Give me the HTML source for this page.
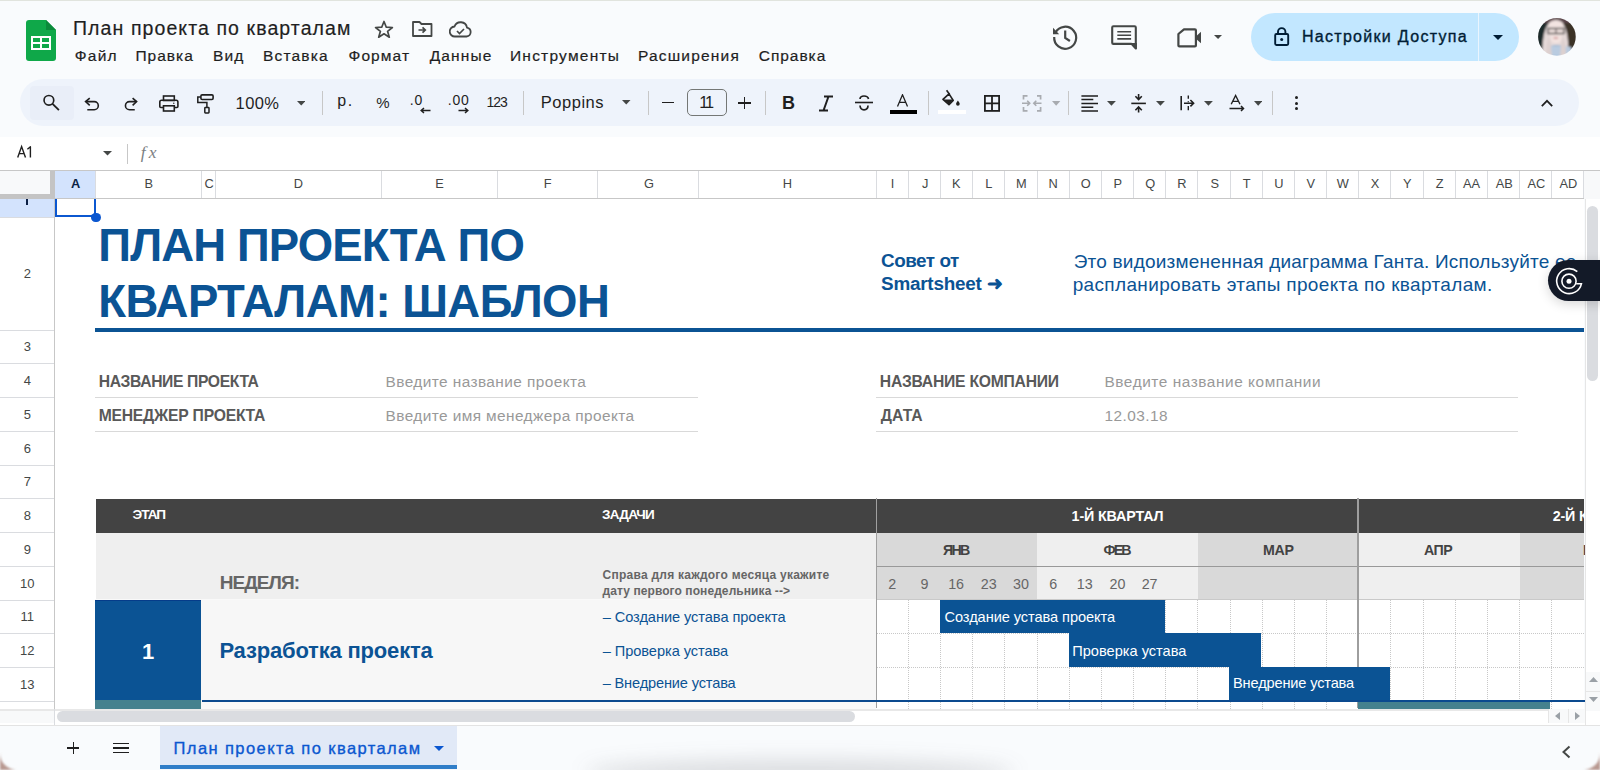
<!DOCTYPE html>
<html><head><meta charset="utf-8"><style>
html,body{margin:0;padding:0;}
body{width:1600px;height:770px;overflow:hidden;position:relative;background:#f9fbfd;font-family:"Liberation Sans",sans-serif;}
.a{position:absolute;}
.t{position:absolute;white-space:pre;}
</style></head><body>
<div class="a" style="left:0px;top:0px;width:1600px;height:1.2px;background:#e1e4de;"></div>
<svg class="a" style="left:26px;top:20px;" width="30" height="41" viewBox="0 0 30 41">
<path d="M0 3 Q0 0 3 0 H20 L30 10 V38 Q30 41 27 41 H3 Q0 41 0 38 Z" fill="#0fa849"/>
<path d="M20 0 L30 10 H20 Z" fill="#0b8a3b"/>
<rect x="5" y="16" width="20" height="14" fill="#fff"/>
<rect x="7" y="18" width="7" height="4" fill="#0fa849"/>
<rect x="16" y="18" width="7" height="4" fill="#0fa849"/>
<rect x="7" y="24" width="7" height="4" fill="#0fa849"/>
<rect x="16" y="24" width="7" height="4" fill="#0fa849"/>
</svg>
<div class="t" style="left:73.00px;top:18.79px;font-size:19.5px;line-height:19.5px;color:#1f1f1f;font-weight:normal;letter-spacing:1.092px;-webkit-text-stroke:0.2px currentColor;">План проекта по кварталам</div>
<svg class="a" style="left:374px;top:20px;" width="20" height="18" viewBox="0 0 20 18"><path d="M10 1.5 L12.3 7.2 L18.4 7.5 L13.6 11.3 L15.3 17.2 L10 13.8 L4.7 17.2 L6.4 11.3 L1.6 7.5 L7.7 7.2 Z" fill="none" stroke="#444746" stroke-width="1.7" stroke-linejoin="round"/></svg>
<svg class="a" style="left:412px;top:21px;" width="21" height="16" viewBox="0 0 21 16"><path d="M1 1 H7.5 L9.5 3 H19.5 V15 H1 Z" fill="none" stroke="#444746" stroke-width="1.8" stroke-linejoin="round"/><path d="M6.5 9 H13 M10.5 6.3 L13.3 9 L10.5 11.7" fill="none" stroke="#444746" stroke-width="1.7"/></svg>
<svg class="a" style="left:449px;top:21px;" width="23" height="17" viewBox="0 0 23 17"><path d="M6 15.5 H17.5 A4.5 4.5 0 0 0 18 6.6 A6.5 6.5 0 0 0 5.5 5.5 A5 5 0 0 0 6 15.5 Z" fill="none" stroke="#444746" stroke-width="1.8"/><path d="M8 10 L10.5 12.5 L15 8" fill="none" stroke="#444746" stroke-width="1.7"/></svg>
<div class="t" style="left:74.70px;top:48.28px;font-size:15.5px;line-height:15.5px;color:#1f1f1f;font-weight:normal;letter-spacing:1.279px;-webkit-text-stroke:0.2px currentColor;">Файл</div>
<div class="t" style="left:135.40px;top:48.28px;font-size:15.5px;line-height:15.5px;color:#1f1f1f;font-weight:normal;letter-spacing:1.012px;-webkit-text-stroke:0.2px currentColor;">Правка</div>
<div class="t" style="left:213.00px;top:48.28px;font-size:15.5px;line-height:15.5px;color:#1f1f1f;font-weight:normal;letter-spacing:1.102px;-webkit-text-stroke:0.2px currentColor;">Вид</div>
<div class="t" style="left:263.00px;top:48.28px;font-size:15.5px;line-height:15.5px;color:#1f1f1f;font-weight:normal;letter-spacing:1.168px;-webkit-text-stroke:0.2px currentColor;">Вставка</div>
<div class="t" style="left:348.50px;top:48.28px;font-size:15.5px;line-height:15.5px;color:#1f1f1f;font-weight:normal;letter-spacing:1.108px;-webkit-text-stroke:0.2px currentColor;">Формат</div>
<div class="t" style="left:429.70px;top:48.28px;font-size:15.5px;line-height:15.5px;color:#1f1f1f;font-weight:normal;letter-spacing:1.124px;-webkit-text-stroke:0.2px currentColor;">Данные</div>
<div class="t" style="left:510.00px;top:48.28px;font-size:15.5px;line-height:15.5px;color:#1f1f1f;font-weight:normal;letter-spacing:1.224px;-webkit-text-stroke:0.2px currentColor;">Инструменты</div>
<div class="t" style="left:638.00px;top:48.28px;font-size:15.5px;line-height:15.5px;color:#1f1f1f;font-weight:normal;letter-spacing:1.184px;-webkit-text-stroke:0.2px currentColor;">Расширения</div>
<div class="t" style="left:758.75px;top:48.28px;font-size:15.5px;line-height:15.5px;color:#1f1f1f;font-weight:normal;letter-spacing:0.953px;-webkit-text-stroke:0.2px currentColor;">Справка</div>
<svg class="a" style="left:1050px;top:22px;" width="30" height="30" viewBox="0 0 30 30"><path d="M5.5 10.5 A11 11 0 1 1 4.2 15" fill="none" stroke="#444746" stroke-width="2.2"/><path d="M3 5.8 L3 12.2 L9.2 12.2 Z" fill="#444746"/><path d="M15.2 8.6 V15.8 L19.9 19" fill="none" stroke="#444746" stroke-width="2.2"/></svg>
<svg class="a" style="left:1110px;top:24px;" width="28" height="27" viewBox="0 0 28 27"><path d="M3.4 2.2 H24.6 Q25.8 2.2 25.8 3.4 V24.5 L21.5 19.9 H3.4 Q2.2 19.9 2.2 18.7 V3.4 Q2.2 2.2 3.4 2.2 Z" fill="none" stroke="#444746" stroke-width="2.1" stroke-linejoin="round"/><path d="M7.3 7.8 H21.1 M7.3 11.2 H21.1 M7.3 14.9 H21.1" stroke="#444746" stroke-width="1.6"/><path d="M20.5 19 L26.8 25.5 V19 Z" fill="#444746"/></svg>
<svg class="a" style="left:1175px;top:26px;" width="30" height="23" viewBox="0 0 30 23"><path d="M3.4 8 L9 3.3 H19.9 Q20.9 3.3 20.9 4.3 V19.4 Q20.9 20.4 19.9 20.4 H4.4 Q3.4 20.4 3.4 19.4 Z" fill="none" stroke="#444746" stroke-width="2.2" stroke-linejoin="round"/><path d="M20.9 10.5 L26 5.8 V17.3 L20.9 12.8 Z" fill="#444746"/></svg>
<svg class="a" style="left:1214.4px;top:34.7px;" width="8.1" height="4" viewBox="0 0 8.1 4"><path d="M0 0 H8.1 L4.05 4 Z" fill="#444746"/></svg>
<div class="a" style="left:1250.5px;top:13px;width:268px;height:48px;background:#c2e7ff;border-radius:24px;"></div>
<div class="a" style="left:1477.5px;top:13px;width:1.2px;height:48px;background:#eaf5fe;"></div>
<svg class="a" style="left:1272px;top:26px;" width="18" height="20" viewBox="0 0 18 20"><rect x="3.2" y="8" width="13" height="11" rx="1.2" fill="none" stroke="#001d35" stroke-width="1.9"/><path d="M6 8 V5.8 A3.7 3.7 0 0 1 13.4 5.8 V8" fill="none" stroke="#001d35" stroke-width="1.9"/><circle cx="9.7" cy="13.5" r="1.5" fill="#001d35"/></svg>
<div class="t" style="left:1301.90px;top:29.36px;font-size:16px;line-height:16px;color:#001d35;font-weight:normal;letter-spacing:1.307px;-webkit-text-stroke:0.35px currentColor;">Настройки Доступа</div>
<svg class="a" style="left:1493px;top:35px;" width="10" height="6" viewBox="0 0 10 6"><path d="M0 0 H10 L5 5 Z" fill="#001d35"/></svg>
<svg class="a" style="left:1537px;top:17px" width="40" height="40" viewBox="0 0 40 40">
<defs><clipPath id="av"><circle cx="19.9" cy="19.85" r="18.9"/></clipPath><filter id="bl" x="-10%" y="-10%" width="120%" height="120%"><feGaussianBlur stdDeviation="0.9"/></filter></defs>
<g clip-path="url(#av)"><g filter="url(#bl)">
<rect width="40" height="40" fill="#1f2b2b"/>
<rect x="25" width="15" height="40" fill="#3a3026"/>
<rect x="0" y="0" width="40" height="6" fill="#5a4548"/>
<path d="M5 40 C5.5 22 7 3 19 3 C30 3 32 22 31 40 Z" fill="#e6dad9"/>
<path d="M12 6 Q19 2 26 6 L26 22 Q19 30 12 22 Z" fill="#f3e4e1"/>
<path d="M11 11.5 H27 V16.5 H11 Z" fill="none" stroke="#4a4444" stroke-width="1.3"/>
<path d="M19 12 V16" stroke="#4a4444" stroke-width="1"/>
<ellipse cx="18.8" cy="21" rx="2.6" ry="1" fill="#d59c9c"/>
<path d="M13 40 L14 29 Q19 27 25 29 L34 30 L36 40 Z" fill="#9fb9d6"/>
<path d="M14 31 H34 M14 34 H35 M14 37 H35" stroke="#e8eef5" stroke-width="1"/>
<path d="M9 40 C9 30 10 22 13 18 L15 40 Z" fill="#ddd0cf"/>
<path d="M23 40 L25 18 C28 22 29 30 29 40 Z" fill="#ddd0cf"/>
</g></g></svg>
<div class="a" style="left:20px;top:79px;width:1559px;height:46.8px;background:#eef3fb;border-radius:23.4px;"></div>
<div class="a" style="left:30px;top:86px;width:44px;height:33.5px;background:#e9eef8;border-radius:4px;"></div>
<svg class="a" style="left:38px;top:90px;" width="28" height="26" viewBox="0 0 28 26"><circle cx="10.9" cy="10.3" r="4.85" fill="none" stroke="#1f1f1f" stroke-width="1.65"/><path d="M14.6 13.9 L20.9 20.2" stroke="#1f1f1f" stroke-width="1.85"/></svg>
<svg class="a" style="left:80px;top:90px;" width="60" height="26" viewBox="0 0 60 26"><path d="M9.75 8.1 L5.6 11.6 L9.75 15.3" fill="none" stroke="#1f1f1f" stroke-width="1.6" stroke-linejoin="miter"/><path d="M5.9 11.6 H14.25 A4.05 4.05 0 0 1 14.25 19.7 H7.3" fill="none" stroke="#1f1f1f" stroke-width="1.6"/><path d="M52.6 8.1 L56.6 11.6 L52.6 15.3" fill="none" stroke="#1f1f1f" stroke-width="1.6"/><path d="M56.3 11.6 H49.5 A4.05 4.05 0 0 0 49.5 19.7 H54.75" fill="none" stroke="#1f1f1f" stroke-width="1.6"/></svg>
<svg class="a" style="left:150px;top:88px;" width="70" height="30" viewBox="0 0 70 30"><rect x="13.5" y="8" width="10.8" height="4.5" fill="none" stroke="#1f1f1f" stroke-width="1.6"/><path d="M13.5 19.5 H10.8 Q9.8 19.5 9.8 18.5 V14 Q9.8 12.3 11.5 12.3 H26.2 Q27.9 12.3 27.9 14 V18.5 Q27.9 19.5 26.9 19.5 H24.3" fill="none" stroke="#1f1f1f" stroke-width="1.6"/><rect x="13.5" y="17.8" width="10.8" height="5.2" fill="none" stroke="#1f1f1f" stroke-width="1.6"/><circle cx="23.8" cy="15.3" r="0.7" fill="#1f1f1f"/><rect x="50.9" y="6.9" width="12.2" height="4.6" rx="1.2" fill="none" stroke="#1f1f1f" stroke-width="1.6"/><path d="M50.5 9.1 H47.8 V14.6 H56.9 V19.2" fill="none" stroke="#1f1f1f" stroke-width="1.5"/><rect x="54.8" y="19.6" width="4.2" height="5.3" rx="0.6" fill="none" stroke="#1f1f1f" stroke-width="1.5"/></svg>
<div class="t" style="left:235.60px;top:95.33px;font-size:16.5px;line-height:16.5px;color:#1f1f1f;font-weight:normal;letter-spacing:0.357px;">100%</div>
<svg class="a" style="left:296.5px;top:101px;" width="8.5" height="4.5" viewBox="0 0 8.5 4.5"><path d="M0 0 H8.5 L4.25 4.5 Z" fill="#444746"/></svg>
<div class="a" style="left:321.5px;top:91px;width:1px;height:24px;background:#c7c7c7;"></div>
<div class="t" style="left:337.30px;top:93.46px;font-size:16px;line-height:16px;color:#1f1f1f;font-weight:normal;letter-spacing:1.602px;">р.</div>
<div class="t" style="left:376.30px;top:94.90px;font-size:15px;line-height:15px;color:#1f1f1f;font-weight:normal;">%</div>
<div class="t" style="left:409.80px;top:92.75px;font-size:14px;line-height:14px;color:#1f1f1f;font-weight:normal;letter-spacing:0.710px;">.0</div>
<svg class="a" style="left:420px;top:106.5px;" width="11" height="7" viewBox="0 0 11 7"><path d="M10.5 3.5 H1.5 M4 1 L1.2 3.5 L4 6" fill="none" stroke="#1f1f1f" stroke-width="1.5"/></svg>
<div class="t" style="left:447.80px;top:92.75px;font-size:14px;line-height:14px;color:#1f1f1f;font-weight:normal;letter-spacing:0.762px;">.00</div>
<svg class="a" style="left:458px;top:106.5px;" width="11" height="7" viewBox="0 0 11 7"><path d="M0.5 3.5 H9.5 M7 1 L9.8 3.5 L7 6" fill="none" stroke="#1f1f1f" stroke-width="1.5"/></svg>
<div class="t" style="left:486.40px;top:95.15px;font-size:14px;line-height:14px;color:#1f1f1f;font-weight:normal;letter-spacing:-0.936px;">123</div>
<div class="a" style="left:522.5px;top:91px;width:1px;height:24px;background:#c7c7c7;"></div>
<div class="t" style="left:540.80px;top:94.03px;font-size:16.5px;line-height:16.5px;color:#1f1f1f;font-weight:normal;letter-spacing:0.520px;">Poppins</div>
<svg class="a" style="left:622px;top:99.5px;" width="8.5" height="5" viewBox="0 0 8.5 5"><path d="M0 0 H8.5 L4.25 4.5 Z" fill="#444746"/></svg>
<div class="a" style="left:648.2px;top:91px;width:1px;height:24px;background:#c7c7c7;"></div>
<div class="a" style="left:662.2px;top:101.5px;width:12px;height:1.8px;background:#1f1f1f;"></div>
<div class="a" style="left:687.1px;top:89px;width:39.5px;height:27.3px;border:1px solid #747775;border-radius:5px;box-sizing:border-box;"></div>
<div class="t" style="left:699.30px;top:94.20px;font-size:16.3px;line-height:16.3px;color:#1f1f1f;font-weight:normal;letter-spacing:-2.200px;">11</div>
<div class="a" style="left:738.1px;top:101.8px;width:12.5px;height:1.8px;background:#1f1f1f;"></div>
<div class="a" style="left:743.5px;top:96.8px;width:1.8px;height:12px;background:#1f1f1f;"></div>
<div class="a" style="left:764.5px;top:91px;width:1px;height:24px;background:#c7c7c7;"></div>
<div class="t" style="left:782.00px;top:93.96px;font-size:18px;line-height:18px;color:#1f1f1f;font-weight:bold;">B</div>
<svg class="a" style="left:818px;top:95px;" width="16" height="17" viewBox="0 0 16 17"><path d="M6 1.5 H15 M1 15.5 H10 M10.5 1.5 L5.5 15.5" fill="none" stroke="#1f1f1f" stroke-width="2"/></svg>
<svg class="a" style="left:853px;top:94px;" width="22" height="18" viewBox="0 0 22 18"><path d="M2 8.5 H20" stroke="#1f1f1f" stroke-width="1.6"/><path d="M15.5 5 C15 2.6 13.2 2 11 2 C8.8 2 7.2 3 7 5" fill="none" stroke="#1f1f1f" stroke-width="1.7"/><path d="M7 11.5 C7.3 14.8 9 15.8 11 15.8 C13.2 15.8 15 14.8 15 11.5" fill="none" stroke="#1f1f1f" stroke-width="1.7"/></svg>
<svg class="a" style="left:896px;top:94px;" width="13" height="13" viewBox="0 0 13 13"><path d="M1.5 12.5 L6.5 0.8 L11.5 12.5 M3.4 8.3 H9.6" fill="none" stroke="#1f1f1f" stroke-width="1.3"/></svg>
<div class="a" style="left:890px;top:110px;width:27px;height:4px;background:#000;"></div>
<div class="a" style="left:927.5px;top:91px;width:1px;height:24px;background:#c7c7c7;"></div>
<svg class="a" style="left:938px;top:88px;" width="30" height="20" viewBox="0 0 30 20"><path d="M8.6 2.3 L11.6 6.5" stroke="#1f1f1f" stroke-width="1.6"/><path d="M5 11.3 L11 5.9 L15.2 12.4 L11 16.6 Z" fill="none" stroke="#1f1f1f" stroke-width="1.7" stroke-linejoin="round"/><path d="M5.6 11.6 H15 L11 16.2 Z" fill="#1f1f1f"/><path d="M19.9 12.6 Q21.7 15 21.7 16 A1.8 1.8 0 0 1 18.1 16 Q18.1 15 19.9 12.6 Z" fill="#1f1f1f"/></svg>
<div class="a" style="left:938px;top:110px;width:28.2px;height:3.9px;background:#fff;"></div>
<svg class="a" style="left:983px;top:94px;" width="18" height="19" viewBox="0 0 18 19"><rect x="1.9" y="1.9" width="14.2" height="15" fill="none" stroke="#1f1f1f" stroke-width="1.8"/><path d="M9 1.9 V16.9 M1.9 9.4 H16.1" stroke="#1f1f1f" stroke-width="1.8"/></svg>
<svg class="a" style="left:1021px;top:94px;" width="22" height="19" viewBox="0 0 22 19"><path d="M2.5 5.5 V1.8 H6.5 M16 1.8 H19.6 V5.5 M2.5 13 V16.8 H6.5 M16 16.8 H19.6 V13" fill="none" stroke="#a8abb0" stroke-width="1.7"/><path d="M1 9.3 H8.5 M6.2 6.8 L8.7 9.3 L6.2 11.8 M20.5 9.3 H13 M15.3 6.8 L12.8 9.3 L15.3 11.8" fill="none" stroke="#a8abb0" stroke-width="1.6"/></svg>
<svg class="a" style="left:1052.3px;top:101px;" width="8.3" height="4.8" viewBox="0 0 8.3 4.8"><path d="M0 0 H8.3 L4.15 4.8 Z" fill="#a8abb0"/></svg>
<div class="a" style="left:1068.2px;top:91px;width:1px;height:24px;background:#c7c7c7;"></div>
<svg class="a" style="left:1081px;top:94px;" width="18" height="18" viewBox="0 0 18 18"><path d="M0.4 1.9 H17 M0.4 5.6 H12.3 M0.4 9.4 H17 M0.4 13.2 H12.3 M0.4 16.9 H17" stroke="#1f1f1f" stroke-width="1.5"/></svg>
<svg class="a" style="left:1107px;top:101px;" width="8.9" height="4.8" viewBox="0 0 8.9 4.8"><path d="M0 0 H8.9 L4.45 4.8 Z" fill="#444746"/></svg>
<svg class="a" style="left:1130px;top:93px;" width="17" height="20" viewBox="0 0 17 20"><path d="M1.3 10.4 H15.9" stroke="#1f1f1f" stroke-width="1.6"/><path d="M8.6 0.9 V6.3 M5.4 3.3 L8.6 6.5 L11.8 3.3 M8.6 19.6 V14.2 M5.4 17.2 L8.6 14 L11.8 17.2" fill="none" stroke="#1f1f1f" stroke-width="1.6"/></svg>
<svg class="a" style="left:1156px;top:101px;" width="8.9" height="4.8" viewBox="0 0 8.9 4.8"><path d="M0 0 H8.9 L4.45 4.8 Z" fill="#444746"/></svg>
<svg class="a" style="left:1179px;top:94px;" width="17" height="18" viewBox="0 0 17 18"><path d="M2.2 1.9 V16.2" stroke="#1f1f1f" stroke-width="1.6"/><path d="M9.3 1.5 V4.8 M9.3 7.3 V8.3 M9.3 12 V16.2" stroke="#1f1f1f" stroke-width="1.4"/><path d="M5 9.2 H14.6 M11.4 6 L14.6 9.2 L11.4 12.4" fill="none" stroke="#1f1f1f" stroke-width="1.6"/></svg>
<svg class="a" style="left:1204.3px;top:101px;" width="8.9" height="4.8" viewBox="0 0 8.9 4.8"><path d="M0 0 H8.9 L4.45 4.8 Z" fill="#444746"/></svg>
<svg class="a" style="left:1228px;top:94px;" width="18" height="18" viewBox="0 0 18 18"><path d="M3.2 10.2 L7.6 1.5 L12 10.2 M4.6 7.4 H10.6" fill="none" stroke="#1f1f1f" stroke-width="1.4"/><path d="M1.5 14.5 H15.5 M13 12 L15.5 14.5 L13 17" fill="none" stroke="#1f1f1f" stroke-width="1.5"/></svg>
<svg class="a" style="left:1253.6px;top:101px;" width="8.4" height="4.8" viewBox="0 0 8.4 4.8"><path d="M0 0 H8.4 L4.2 4.8 Z" fill="#444746"/></svg>
<div class="a" style="left:1272.1px;top:91px;width:1px;height:24px;background:#c7c7c7;"></div>
<div class="a" style="left:1294.9px;top:95.8px;width:3.4px;height:3.4px;background:#1f1f1f;border-radius:50%;"></div>
<div class="a" style="left:1294.9px;top:101.5px;width:3.4px;height:3.4px;background:#1f1f1f;border-radius:50%;"></div>
<div class="a" style="left:1294.9px;top:107.05px;width:3.4px;height:3.4px;background:#1f1f1f;border-radius:50%;"></div>
<svg class="a" style="left:1540px;top:97px;" width="14" height="11" viewBox="0 0 14 11"><path d="M1.8 9.1 L7 3.8 L12.2 9.1" fill="none" stroke="#1f1f1f" stroke-width="1.75"/></svg>
<div class="a" style="left:0px;top:136.5px;width:1600px;height:34px;background:#ffffff;"></div>
<svg class="a" style="left:12px;top:142px;" width="28" height="20" viewBox="0 0 28 20"><path d="M5.7 15.4 L9.6 4.6 L13.5 15.4 M7 11.6 H12.2" fill="none" stroke="#1f1f1f" stroke-width="1.4"/><path d="M18.4 15.6 V4.7 L15.4 7.3" fill="none" stroke="#1f1f1f" stroke-width="1.4" stroke-linejoin="round"/></svg>
<svg class="a" style="left:103px;top:150.5px;" width="9" height="5" viewBox="0 0 9 5"><path d="M0 0 H9 L4.5 4.5 Z" fill="#444746"/></svg>
<div class="a" style="left:127px;top:144px;width:1px;height:20px;background:#c7c7c7;"></div>
<div class="t" style="left:140.80px;top:143.69px;font-size:17.5px;line-height:17.5px;color:#7c7f83;font-weight:normal;font-family:'Liberation Serif',serif;font-style:italic;letter-spacing:3.000px;">fx</div>
<div class="a" style="left:0px;top:170px;width:1600px;height:1px;background:#c7c7c7;"></div>
<div class="a" style="left:0px;top:171px;width:1584px;height:27.5px;background:#ffffff;"></div>
<div class="a" style="left:0px;top:171px;width:49.5px;height:23px;background:#f8f9fa;"></div>
<div class="a" style="left:0px;top:198.5px;width:1584px;height:510px;background:#ffffff;"></div>
<div class="a" style="left:0px;top:198.5px;width:54.5px;height:18.7px;background:#d3e3fd;"></div>
<div class="a" style="left:0px;top:216.7px;width:54.5px;height:1px;background:#dadce0;"></div>
<div class="a" style="left:26.4px;top:198.5px;width:1.9px;height:6.2px;background:#0b1f45;"></div>
<div class="a" style="left:0px;top:329.5px;width:54.5px;height:1px;background:#dadce0;"></div>
<div class="t" style="left:23.70px;top:267.10px;font-size:13px;line-height:13px;color:#444746;font-weight:normal;">2</div>
<div class="a" style="left:0px;top:363.25px;width:54.5px;height:1px;background:#dadce0;"></div>
<div class="t" style="left:23.70px;top:340.37px;font-size:13px;line-height:13px;color:#444746;font-weight:normal;">3</div>
<div class="a" style="left:0px;top:397.0px;width:54.5px;height:1px;background:#dadce0;"></div>
<div class="t" style="left:23.70px;top:374.12px;font-size:13px;line-height:13px;color:#444746;font-weight:normal;">4</div>
<div class="a" style="left:0px;top:430.75px;width:54.5px;height:1px;background:#dadce0;"></div>
<div class="t" style="left:23.70px;top:407.87px;font-size:13px;line-height:13px;color:#444746;font-weight:normal;">5</div>
<div class="a" style="left:0px;top:464.5px;width:54.5px;height:1px;background:#dadce0;"></div>
<div class="t" style="left:23.70px;top:441.62px;font-size:13px;line-height:13px;color:#444746;font-weight:normal;">6</div>
<div class="a" style="left:0px;top:498.25px;width:54.5px;height:1px;background:#dadce0;"></div>
<div class="t" style="left:23.70px;top:475.37px;font-size:13px;line-height:13px;color:#444746;font-weight:normal;">7</div>
<div class="a" style="left:0px;top:532.0px;width:54.5px;height:1px;background:#dadce0;"></div>
<div class="t" style="left:23.70px;top:509.12px;font-size:13px;line-height:13px;color:#444746;font-weight:normal;">8</div>
<div class="a" style="left:0px;top:565.75px;width:54.5px;height:1px;background:#dadce0;"></div>
<div class="t" style="left:23.70px;top:542.87px;font-size:13px;line-height:13px;color:#444746;font-weight:normal;">9</div>
<div class="a" style="left:0px;top:599.5px;width:54.5px;height:1px;background:#dadce0;"></div>
<div class="t" style="left:20.09px;top:576.62px;font-size:13px;line-height:13px;color:#444746;font-weight:normal;">10</div>
<div class="a" style="left:0px;top:633.25px;width:54.5px;height:1px;background:#dadce0;"></div>
<div class="t" style="left:20.57px;top:610.37px;font-size:13px;line-height:13px;color:#444746;font-weight:normal;">11</div>
<div class="a" style="left:0px;top:667.0px;width:54.5px;height:1px;background:#dadce0;"></div>
<div class="t" style="left:20.09px;top:644.12px;font-size:13px;line-height:13px;color:#444746;font-weight:normal;">12</div>
<div class="a" style="left:0px;top:700.75px;width:54.5px;height:1px;background:#dadce0;"></div>
<div class="t" style="left:20.09px;top:677.87px;font-size:13px;line-height:13px;color:#444746;font-weight:normal;">13</div>
<div class="a" style="left:0px;top:734.5px;width:54.5px;height:1px;background:#dadce0;"></div>
<div class="a" style="left:54px;top:198.5px;width:1px;height:510px;background:#c7c7c7;"></div>
<div class="t" style="left:98.30px;top:223.28px;font-size:45.5px;line-height:45.5px;color:#0b5394;font-weight:bold;letter-spacing:-0.865px;">ПЛАН ПРОЕКТА ПО</div>
<div class="t" style="left:98.30px;top:279.18px;font-size:45.5px;line-height:45.5px;color:#0b5394;font-weight:bold;letter-spacing:-0.541px;">КВАРТАЛАМ: ШАБЛОН</div>
<div class="a" style="left:95px;top:328.3px;width:1489px;height:3.5px;background:#0b5394;"></div>
<div class="t" style="left:881.00px;top:252.00px;font-size:18.9px;line-height:18.9px;color:#0b5394;font-weight:bold;letter-spacing:-0.482px;">Совет от</div>
<div class="t" style="left:881.00px;top:275.00px;font-size:18.9px;line-height:18.9px;color:#0b5394;font-weight:bold;letter-spacing:-0.222px;">Smartsheet ➜</div>
<div class="t" style="left:1072.70px;top:274.82px;font-size:19px;line-height:19px;color:#0b5394;font-weight:normal;letter-spacing:0.350px;">распланировать этапы проекта по кварталам.</div>
<div class="t" style="left:1073.70px;top:251.72px;font-size:19px;line-height:19px;color:#0b5394;font-weight:normal;letter-spacing:0.210px;">Это видоизмененная диаграмма Ганта. Используйте ее</div>
<div class="t" style="left:98.70px;top:374.01px;font-size:15.7px;line-height:15.7px;color:#595959;font-weight:bold;letter-spacing:-0.376px;">НАЗВАНИЕ ПРОЕКТА</div>
<div class="t" style="left:98.70px;top:407.51px;font-size:15.7px;line-height:15.7px;color:#595959;font-weight:bold;letter-spacing:-0.228px;">МЕНЕДЖЕР ПРОЕКТА</div>
<div class="t" style="left:385.60px;top:374.16px;font-size:15.4px;line-height:15.4px;color:#999999;font-weight:normal;letter-spacing:0.421px;">Введите название проекта</div>
<div class="t" style="left:385.60px;top:407.56px;font-size:15.4px;line-height:15.4px;color:#999999;font-weight:normal;letter-spacing:0.412px;">Введите имя менеджера проекта</div>
<div class="a" style="left:95px;top:397px;width:603.4px;height:1px;background:#d9d9d9;"></div>
<div class="a" style="left:95px;top:431px;width:603.4px;height:1px;background:#d9d9d9;"></div>
<div class="t" style="left:879.80px;top:374.01px;font-size:15.7px;line-height:15.7px;color:#595959;font-weight:bold;letter-spacing:-0.240px;">НАЗВАНИЕ КОМПАНИИ</div>
<div class="t" style="left:880.80px;top:407.51px;font-size:15.7px;line-height:15.7px;color:#595959;font-weight:bold;letter-spacing:0.061px;">ДАТА</div>
<div class="t" style="left:1104.50px;top:374.16px;font-size:15.4px;line-height:15.4px;color:#999999;font-weight:normal;letter-spacing:0.552px;">Введите название компании</div>
<div class="t" style="left:1104.50px;top:407.56px;font-size:15.4px;line-height:15.4px;color:#999999;font-weight:normal;letter-spacing:0.450px;">12.03.18</div>
<div class="a" style="left:876.2px;top:397px;width:642px;height:1px;background:#d9d9d9;"></div>
<div class="a" style="left:876.2px;top:431px;width:642px;height:1px;background:#d9d9d9;"></div>
<div class="a" style="left:95.5px;top:499.2px;width:1488.5px;height:33.69999999999999px;background:#434343;"></div>
<div class="t" style="left:132.60px;top:508.19px;font-size:13.6px;line-height:13.6px;color:#ffffff;font-weight:bold;letter-spacing:-1.019px;">ЭТАП</div>
<div class="t" style="left:602.00px;top:508.17px;font-size:13.5px;line-height:13.5px;color:#ffffff;font-weight:bold;letter-spacing:-0.706px;">ЗАДАЧИ</div>
<div class="t" style="left:1071.60px;top:508.75px;font-size:14.3px;line-height:14.3px;color:#ffffff;font-weight:bold;letter-spacing:-0.140px;">1-Й КВАРТАЛ</div>
<div class="t" style="left:1552.70px;top:508.75px;font-size:14.3px;line-height:14.3px;color:#ffffff;font-weight:bold;letter-spacing:-0.140px;">2-Й КВАРТАЛ</div>
<div class="a" style="left:95.5px;top:532.9px;width:780.9px;height:67.10000000000002px;background:#efefef;"></div>
<div class="a" style="left:876.2px;top:532.9px;width:160.84090909090924px;height:67.10000000000002px;background:#d9d9d9;"></div>
<div class="t" style="left:943.00px;top:542.68px;font-size:14.2px;line-height:14.2px;color:#434343;font-weight:bold;letter-spacing:-1.722px;">ЯНВ</div>
<div class="a" style="left:1037.0409090909093px;top:532.9px;width:160.840909090909px;height:67.10000000000002px;background:#efefef;"></div>
<div class="t" style="left:1103.50px;top:542.68px;font-size:14.2px;line-height:14.2px;color:#434343;font-weight:bold;letter-spacing:-1.886px;">ФЕВ</div>
<div class="a" style="left:1197.8818181818183px;top:532.9px;width:160.840909090909px;height:67.10000000000002px;background:#d9d9d9;"></div>
<div class="t" style="left:1262.90px;top:542.68px;font-size:14.2px;line-height:14.2px;color:#434343;font-weight:bold;letter-spacing:-0.232px;">МАР</div>
<div class="a" style="left:1358.7227272727273px;top:532.9px;width:160.84090909090924px;height:67.10000000000002px;background:#efefef;"></div>
<div class="t" style="left:1424.00px;top:542.68px;font-size:14.2px;line-height:14.2px;color:#434343;font-weight:bold;letter-spacing:-0.478px;">АПР</div>
<div class="a" style="left:1519.5636363636365px;top:532.9px;width:64.43636363636347px;height:67.10000000000002px;background:#d9d9d9;"></div>
<div class="t" style="left:1583.00px;top:542.68px;font-size:14.2px;line-height:14.2px;color:#434343;font-weight:bold;letter-spacing:-1.032px;">МАЙ</div>
<div class="t" style="left:888.28px;top:576.50px;font-size:14.3px;line-height:14.3px;color:#666666;font-weight:normal;">2</div>
<div class="t" style="left:920.45px;top:576.50px;font-size:14.3px;line-height:14.3px;color:#666666;font-weight:normal;">9</div>
<div class="t" style="left:948.14px;top:576.50px;font-size:14.3px;line-height:14.3px;color:#666666;font-weight:normal;">16</div>
<div class="t" style="left:980.81px;top:576.50px;font-size:14.3px;line-height:14.3px;color:#666666;font-weight:normal;">23</div>
<div class="t" style="left:1012.98px;top:576.50px;font-size:14.3px;line-height:14.3px;color:#666666;font-weight:normal;">30</div>
<div class="t" style="left:1049.13px;top:576.50px;font-size:14.3px;line-height:14.3px;color:#666666;font-weight:normal;">6</div>
<div class="t" style="left:1076.82px;top:576.50px;font-size:14.3px;line-height:14.3px;color:#666666;font-weight:normal;">13</div>
<div class="t" style="left:1109.49px;top:576.50px;font-size:14.3px;line-height:14.3px;color:#666666;font-weight:normal;">20</div>
<div class="t" style="left:1141.65px;top:576.50px;font-size:14.3px;line-height:14.3px;color:#666666;font-weight:normal;">27</div>
<div class="a" style="left:876.4px;top:565.8px;width:707.6px;height:1.3px;background:#999999;"></div>
<div class="a" style="left:876.4px;top:598.8px;width:707.6px;height:1.6px;background:#c9c9c9;"></div>
<div class="t" style="left:219.70px;top:573.22px;font-size:19px;line-height:19px;color:#666666;font-weight:bold;letter-spacing:-0.932px;">НЕДЕЛЯ:</div>
<div class="t" style="left:602.50px;top:569.24px;font-size:12px;line-height:12px;color:#666666;font-weight:bold;letter-spacing:0.251px;">Справа для каждого месяца укажите</div>
<div class="t" style="left:602.50px;top:585.24px;font-size:12px;line-height:12px;color:#666666;font-weight:bold;letter-spacing:0.082px;">дату первого понедельника --&gt;</div>
<div class="a" style="left:95px;top:600.0px;width:106.25px;height:100.70000000000005px;background:#0b5394;"></div>
<div class="a" style="left:95px;top:599.6px;width:106.25px;height:1.2px;background:#053c8a;"></div>
<div class="a" style="left:95px;top:598.6px;width:781.4px;height:1px;background:#f9f9f9;"></div>
<div class="a" style="left:201.25px;top:600.0px;width:675.15px;height:100.70000000000005px;background:#f7f7f7;"></div>
<div class="a" style="left:201.25px;top:700.7px;width:675.15px;height:8px;background:#f9f9f9;"></div>
<div class="t" style="left:142.00px;top:640.98px;font-size:22px;line-height:22px;color:#ffffff;font-weight:bold;">1</div>
<div class="t" style="left:219.40px;top:639.98px;font-size:22px;line-height:22px;color:#0b5394;font-weight:bold;letter-spacing:-0.182px;">Разработка проекта</div>
<div class="t" style="left:602.70px;top:609.94px;font-size:14.6px;line-height:14.6px;color:#0b5394;font-weight:normal;letter-spacing:-0.062px;">– Создание устава проекта</div>
<div class="t" style="left:602.70px;top:644.04px;font-size:14.6px;line-height:14.6px;color:#0b5394;font-weight:normal;letter-spacing:-0.053px;">– Проверка устава</div>
<div class="t" style="left:602.70px;top:675.64px;font-size:14.6px;line-height:14.6px;color:#0b5394;font-weight:normal;letter-spacing:-0.156px;">– Внедрение устава</div>
<div class="a" style="left:907.87px;top:600.0px;width:0;height:108.5px;border-left:1px dotted #c8c8c8"></div>
<div class="a" style="left:940.04px;top:600.0px;width:0;height:108.5px;border-left:1px dotted #c8c8c8"></div>
<div class="a" style="left:972.20px;top:600.0px;width:0;height:108.5px;border-left:1px dotted #c8c8c8"></div>
<div class="a" style="left:1004.37px;top:600.0px;width:0;height:108.5px;border-left:1px dotted #c8c8c8"></div>
<div class="a" style="left:1036.54px;top:600.0px;width:0;height:108.5px;border-left:1px dotted #c8c8c8"></div>
<div class="a" style="left:1068.71px;top:600.0px;width:0;height:108.5px;border-left:1px dotted #c8c8c8"></div>
<div class="a" style="left:1100.88px;top:600.0px;width:0;height:108.5px;border-left:1px dotted #c8c8c8"></div>
<div class="a" style="left:1133.05px;top:600.0px;width:0;height:108.5px;border-left:1px dotted #c8c8c8"></div>
<div class="a" style="left:1165.21px;top:600.0px;width:0;height:108.5px;border-left:1px dotted #c8c8c8"></div>
<div class="a" style="left:1197.38px;top:600.0px;width:0;height:108.5px;border-left:1px dotted #c8c8c8"></div>
<div class="a" style="left:1229.55px;top:600.0px;width:0;height:108.5px;border-left:1px dotted #c8c8c8"></div>
<div class="a" style="left:1261.72px;top:600.0px;width:0;height:108.5px;border-left:1px dotted #c8c8c8"></div>
<div class="a" style="left:1293.89px;top:600.0px;width:0;height:108.5px;border-left:1px dotted #c8c8c8"></div>
<div class="a" style="left:1326.05px;top:600.0px;width:0;height:108.5px;border-left:1px dotted #c8c8c8"></div>
<div class="a" style="left:1390.39px;top:600.0px;width:0;height:108.5px;border-left:1px dotted #c8c8c8"></div>
<div class="a" style="left:1422.56px;top:600.0px;width:0;height:108.5px;border-left:1px dotted #c8c8c8"></div>
<div class="a" style="left:1454.73px;top:600.0px;width:0;height:108.5px;border-left:1px dotted #c8c8c8"></div>
<div class="a" style="left:1486.90px;top:600.0px;width:0;height:108.5px;border-left:1px dotted #c8c8c8"></div>
<div class="a" style="left:1519.06px;top:600.0px;width:0;height:108.5px;border-left:1px dotted #c8c8c8"></div>
<div class="a" style="left:1551.23px;top:600.0px;width:0;height:108.5px;border-left:1px dotted #c8c8c8"></div>
<div class="a" style="left:876.4px;top:632.90px;width:707.6px;height:0;border-top:1px dotted #c8c8c8"></div>
<div class="a" style="left:876.4px;top:666.60px;width:707.6px;height:0;border-top:1px dotted #c8c8c8"></div>
<div class="a" style="left:875.9px;top:498.2px;width:1.2px;height:210.3px;background:#a0a0a0;"></div>
<div class="a" style="left:1357.2px;top:498.2px;width:1.4px;height:210.3px;background:#9e9e9e;"></div>
<div class="a" style="left:939.9363636363637px;top:600.4px;width:224.8772727272726px;height:33.0px;background:#0b5394;"></div>
<div class="t" style="left:944.54px;top:610.39px;font-size:14.6px;line-height:14.6px;color:#ffffff;font-weight:normal;letter-spacing:-0.074px;">Создание устава проекта</div>
<div class="a" style="left:1068.609090909091px;top:633.4px;width:192.70909090909072px;height:33.700000000000045px;background:#0b5394;"></div>
<div class="t" style="left:1072.21px;top:643.54px;font-size:14.6px;line-height:14.6px;color:#ffffff;font-weight:normal;letter-spacing:0.002px;">Проверка устава</div>
<div class="a" style="left:1229.4500000000003px;top:667.1px;width:160.54090909090883px;height:33.60000000000002px;background:#0b5394;"></div>
<div class="t" style="left:1233.05px;top:675.84px;font-size:14.6px;line-height:14.6px;color:#ffffff;font-weight:normal;letter-spacing:-0.158px;">Внедрение устава</div>
<div class="a" style="left:201.5px;top:700px;width:1383px;height:2px;background:#0b4a8f;"></div>
<div class="a" style="left:95px;top:700.4px;width:106.25px;height:8.35px;background:#45818e;"></div>
<div class="a" style="left:1357.7px;top:701.8px;width:192px;height:7px;background:#45818e;"></div>
<div class="a" style="left:54.5px;top:171px;width:40.8px;height:27.5px;background:#d3e3fd;"></div>
<div class="a" style="left:94.8px;top:171px;width:1px;height:27.5px;background:#dadce0;"></div>
<div class="t" style="left:70.90px;top:178.06px;font-size:12.8px;line-height:12.8px;color:#0b1f45;font-weight:bold;">A</div>
<div class="a" style="left:201.0px;top:171px;width:1px;height:27.5px;background:#dadce0;"></div>
<div class="t" style="left:144.40px;top:178.06px;font-size:12.8px;line-height:12.8px;color:#444746;font-weight:normal;">B</div>
<div class="a" style="left:215.1px;top:171px;width:1px;height:27.5px;background:#dadce0;"></div>
<div class="t" style="left:204.55px;top:178.06px;font-size:12.8px;line-height:12.8px;color:#444746;font-weight:normal;">C</div>
<div class="a" style="left:380.5px;top:171px;width:1px;height:27.5px;background:#dadce0;"></div>
<div class="t" style="left:293.80px;top:178.06px;font-size:12.8px;line-height:12.8px;color:#444746;font-weight:normal;">D</div>
<div class="a" style="left:497.0px;top:171px;width:1px;height:27.5px;background:#dadce0;"></div>
<div class="t" style="left:435.25px;top:178.06px;font-size:12.8px;line-height:12.8px;color:#444746;font-weight:normal;">E</div>
<div class="a" style="left:597.3px;top:171px;width:1px;height:27.5px;background:#dadce0;"></div>
<div class="t" style="left:543.65px;top:178.06px;font-size:12.8px;line-height:12.8px;color:#444746;font-weight:normal;">F</div>
<div class="a" style="left:697.9px;top:171px;width:1px;height:27.5px;background:#dadce0;"></div>
<div class="t" style="left:644.10px;top:178.06px;font-size:12.8px;line-height:12.8px;color:#444746;font-weight:normal;">G</div>
<div class="a" style="left:875.7px;top:171px;width:1px;height:27.5px;background:#dadce0;"></div>
<div class="t" style="left:782.80px;top:178.06px;font-size:12.8px;line-height:12.8px;color:#444746;font-weight:normal;">H</div>
<div class="a" style="left:907.8681818181818px;top:171px;width:1px;height:27.5px;background:#dadce0;"></div>
<div class="t" style="left:890.78px;top:178.06px;font-size:12.8px;line-height:12.8px;color:#444746;font-weight:normal;">I</div>
<div class="a" style="left:940.0363636363637px;top:171px;width:1px;height:27.5px;background:#dadce0;"></div>
<div class="t" style="left:921.95px;top:178.06px;font-size:12.8px;line-height:12.8px;color:#444746;font-weight:normal;">J</div>
<div class="a" style="left:972.2045454545455px;top:171px;width:1px;height:27.5px;background:#dadce0;"></div>
<div class="t" style="left:952.12px;top:178.06px;font-size:12.8px;line-height:12.8px;color:#444746;font-weight:normal;">K</div>
<div class="a" style="left:1004.3727272727274px;top:171px;width:1px;height:27.5px;background:#dadce0;"></div>
<div class="t" style="left:985.29px;top:178.06px;font-size:12.8px;line-height:12.8px;color:#444746;font-weight:normal;">L</div>
<div class="a" style="left:1036.5409090909093px;top:171px;width:1px;height:27.5px;background:#dadce0;"></div>
<div class="t" style="left:1015.96px;top:178.06px;font-size:12.8px;line-height:12.8px;color:#444746;font-weight:normal;">M</div>
<div class="a" style="left:1068.709090909091px;top:171px;width:1px;height:27.5px;background:#dadce0;"></div>
<div class="t" style="left:1048.62px;top:178.06px;font-size:12.8px;line-height:12.8px;color:#444746;font-weight:normal;">N</div>
<div class="a" style="left:1100.8772727272728px;top:171px;width:1px;height:27.5px;background:#dadce0;"></div>
<div class="t" style="left:1080.79px;top:178.06px;font-size:12.8px;line-height:12.8px;color:#444746;font-weight:normal;">O</div>
<div class="a" style="left:1133.0454545454545px;top:171px;width:1px;height:27.5px;background:#dadce0;"></div>
<div class="t" style="left:1113.46px;top:178.06px;font-size:12.8px;line-height:12.8px;color:#444746;font-weight:normal;">P</div>
<div class="a" style="left:1165.2136363636364px;top:171px;width:1px;height:27.5px;background:#dadce0;"></div>
<div class="t" style="left:1145.13px;top:178.06px;font-size:12.8px;line-height:12.8px;color:#444746;font-weight:normal;">Q</div>
<div class="a" style="left:1197.3818181818183px;top:171px;width:1px;height:27.5px;background:#dadce0;"></div>
<div class="t" style="left:1177.30px;top:178.06px;font-size:12.8px;line-height:12.8px;color:#444746;font-weight:normal;">R</div>
<div class="a" style="left:1229.5500000000002px;top:171px;width:1px;height:27.5px;background:#dadce0;"></div>
<div class="t" style="left:1210.47px;top:178.06px;font-size:12.8px;line-height:12.8px;color:#444746;font-weight:normal;">S</div>
<div class="a" style="left:1261.7181818181818px;top:171px;width:1px;height:27.5px;background:#dadce0;"></div>
<div class="t" style="left:1242.63px;top:178.06px;font-size:12.8px;line-height:12.8px;color:#444746;font-weight:normal;">T</div>
<div class="a" style="left:1293.8863636363637px;top:171px;width:1px;height:27.5px;background:#dadce0;"></div>
<div class="t" style="left:1274.30px;top:178.06px;font-size:12.8px;line-height:12.8px;color:#444746;font-weight:normal;">U</div>
<div class="a" style="left:1326.0545454545454px;top:171px;width:1px;height:27.5px;background:#dadce0;"></div>
<div class="t" style="left:1306.47px;top:178.06px;font-size:12.8px;line-height:12.8px;color:#444746;font-weight:normal;">V</div>
<div class="a" style="left:1358.2227272727273px;top:171px;width:1px;height:27.5px;background:#dadce0;"></div>
<div class="t" style="left:1336.64px;top:178.06px;font-size:12.8px;line-height:12.8px;color:#444746;font-weight:normal;">W</div>
<div class="a" style="left:1390.3909090909092px;top:171px;width:1px;height:27.5px;background:#dadce0;"></div>
<div class="t" style="left:1370.81px;top:178.06px;font-size:12.8px;line-height:12.8px;color:#444746;font-weight:normal;">X</div>
<div class="a" style="left:1422.559090909091px;top:171px;width:1px;height:27.5px;background:#dadce0;"></div>
<div class="t" style="left:1402.98px;top:178.06px;font-size:12.8px;line-height:12.8px;color:#444746;font-weight:normal;">Y</div>
<div class="a" style="left:1454.727272727273px;top:171px;width:1px;height:27.5px;background:#dadce0;"></div>
<div class="t" style="left:1435.64px;top:178.06px;font-size:12.8px;line-height:12.8px;color:#444746;font-weight:normal;">Z</div>
<div class="a" style="left:1486.8954545454546px;top:171px;width:1px;height:27.5px;background:#dadce0;"></div>
<div class="t" style="left:1463.04px;top:178.06px;font-size:12.8px;line-height:12.8px;color:#444746;font-weight:normal;">AA</div>
<div class="a" style="left:1519.0636363636365px;top:171px;width:1px;height:27.5px;background:#dadce0;"></div>
<div class="t" style="left:1495.71px;top:178.06px;font-size:12.8px;line-height:12.8px;color:#444746;font-weight:normal;">AB</div>
<div class="a" style="left:1551.2318181818182px;top:171px;width:1px;height:27.5px;background:#dadce0;"></div>
<div class="t" style="left:1527.38px;top:178.06px;font-size:12.8px;line-height:12.8px;color:#444746;font-weight:normal;">AC</div>
<div class="a" style="left:1583.4px;top:171px;width:1px;height:27.5px;background:#dadce0;"></div>
<div class="t" style="left:1559.55px;top:178.06px;font-size:12.8px;line-height:12.8px;color:#444746;font-weight:normal;">AD</div>
<div class="a" style="left:1584px;top:171px;width:16px;height:27.5px;background:#f8f9fa;"></div>
<div class="a" style="left:49.5px;top:171px;width:5px;height:28px;background:#c4c4c4;"></div>
<div class="a" style="left:0px;top:194px;width:54.5px;height:4.5px;background:#c4c4c4;"></div>
<div class="a" style="left:54.5px;top:197.5px;width:1529.5px;height:1.2px;background:#c7c7c7;"></div>
<div class="a" style="left:55px;top:198.5px;width:40.5px;height:18.6px;border:2px solid #0b57d0;border-top:none;box-sizing:border-box;"></div>
<div class="a" style="left:91.1px;top:212.8px;width:9.6px;height:9.6px;background:#0b57d0;border-radius:50%;"></div>
<div class="a" style="left:0px;top:708.75px;width:1600px;height:16px;background:#ffffff;"></div>
<div class="a" style="left:0px;top:709.4px;width:1584px;height:1.2px;background:#e8e8e8;"></div>
<div class="a" style="left:0px;top:710.6px;width:54.5px;height:12px;background:#f8f9fa;"></div>
<div class="a" style="left:54px;top:708.5px;width:1px;height:16.5px;background:#dadce0;"></div>
<div class="a" style="left:56.9px;top:711.25px;width:798px;height:11px;background:#dadce0;border-radius:5.5px;"></div>
<div class="a" style="left:1548px;top:709px;width:19.5px;height:14px;background:#f8f9fa;border-left:1px solid #e6e6e6;"></div>
<div class="a" style="left:1568px;top:709px;width:17px;height:14px;background:#f8f9fa;border-left:1px solid #e6e6e6;"></div>
<svg class="a" style="left:1555px;top:712px;" width="6" height="8" viewBox="0 0 6 8"><path d="M5 0 V8 L0 4 Z" fill="#9aa0a6"/></svg>
<svg class="a" style="left:1575px;top:712px;" width="6" height="8" viewBox="0 0 6 8"><path d="M0 0 V8 L5 4 Z" fill="#9aa0a6"/></svg>
<div class="a" style="left:1584.5px;top:198.5px;width:15.5px;height:526px;background:#ffffff;border-left:1px solid #e6e6e6;"></div>
<div class="a" style="left:1586.8px;top:206.4px;width:11px;height:175px;background:#dadce0;border-radius:6px;"></div>
<div class="a" style="left:1585.5px;top:671.5px;width:14.5px;height:19px;background:#f8f9fa;"></div>
<div class="a" style="left:1585.5px;top:690.5px;width:14.5px;height:19px;background:#f8f9fa;border-top:1px solid #e6e6e6;"></div>
<svg class="a" style="left:1589px;top:677px;" width="9" height="5" viewBox="0 0 9 5"><path d="M0 5 H9 L4.5 0 Z" fill="#9aa0a6"/></svg>
<svg class="a" style="left:1589px;top:697px;" width="9" height="5" viewBox="0 0 9 5"><path d="M0 0 H9 L4.5 5 Z" fill="#9aa0a6"/></svg>
<div class="a" style="left:0px;top:724.5px;width:1600px;height:1px;background:#e3e3e3;"></div>
<div class="a" style="left:0px;top:725.5px;width:1600px;height:44.5px;background:#f9fbfd;"></div>
<div class="a" style="left:67.2px;top:747.1px;width:12.3px;height:1.6px;background:#1f1f1f;"></div>
<div class="a" style="left:72.7px;top:742.1px;width:1.6px;height:11.9px;background:#1f1f1f;"></div>
<div class="a" style="left:112.9px;top:742.85px;width:16.5px;height:1.5px;background:#1f1f1f;"></div>
<div class="a" style="left:112.9px;top:747.15px;width:16.5px;height:1.5px;background:#1f1f1f;"></div>
<div class="a" style="left:112.9px;top:751.65px;width:16.5px;height:1.5px;background:#1f1f1f;"></div>
<div class="a" style="left:159.5px;top:725.5px;width:297.5px;height:44.5px;background:#e1e9f7;"></div>
<div class="a" style="left:160.3px;top:765.3px;width:296.5px;height:3.6px;background:#2f7dc8;"></div>
<div class="a" style="left:159.5px;top:768.9px;width:297.5px;height:1.1px;background:#f6f8fc;"></div>
<div class="t" style="left:173.60px;top:740.13px;font-size:16.5px;line-height:16.5px;color:#0b57d0;font-weight:normal;letter-spacing:1.413px;-webkit-text-stroke:0.35px currentColor;">План проекта по кварталам</div>
<svg class="a" style="left:434px;top:746px;" width="10" height="6" viewBox="0 0 10 6"><path d="M0 0 H10 L5 5 Z" fill="#0b57d0"/></svg>
<svg class="a" style="left:1561px;top:745px;" width="10" height="14" viewBox="0 0 10 14"><path d="M8.5 1.5 L2.5 7 L8.5 12.5" fill="none" stroke="#444746" stroke-width="2"/></svg>
<div class="a" style="left:1547.5px;top:260.1px;width:60px;height:41.3px;background:#131a28;border-radius:20.6px 0 0 20.6px;box-shadow:0 3px 12px rgba(0,0,0,0.16);"></div>
<svg class="a" style="left:1549px;top:262px;" width="40" height="40" viewBox="0 0 40 40"><path d="M28.3 9.6 A12.5 12.5 0 1 0 32.4 21.8 H27.2" fill="none" stroke="#fff" stroke-width="1.6"/><circle cx="20" cy="19.2" r="7.1" fill="none" stroke="#fff" stroke-width="1.6"/><circle cx="20" cy="19.2" r="2.5" fill="#fff"/></svg>
<div class="a" style="left:585px;top:760px;width:430px;height:26px;background:rgba(60,64,70,0.16);filter:blur(10px);border-radius:50%;"></div>
<svg class="a" style="left:0;top:752px" width="20" height="18" viewBox="0 0 20 18"><path d="M0 0 V18 H16 Q8 17 3 11 Q0 7 0 0 Z" fill="#b89890" filter="url(#cb)"/><defs><filter id="cb"><feGaussianBlur stdDeviation="0.8"/></filter></defs></svg>
<svg class="a" style="left:1580px;top:752px" width="20" height="18" viewBox="0 0 20 18"><path d="M20 0 V18 H4 Q12 17 17 11 Q20 7 20 0 Z" fill="#b89890" filter="url(#cb)"/></svg>
</body></html>
